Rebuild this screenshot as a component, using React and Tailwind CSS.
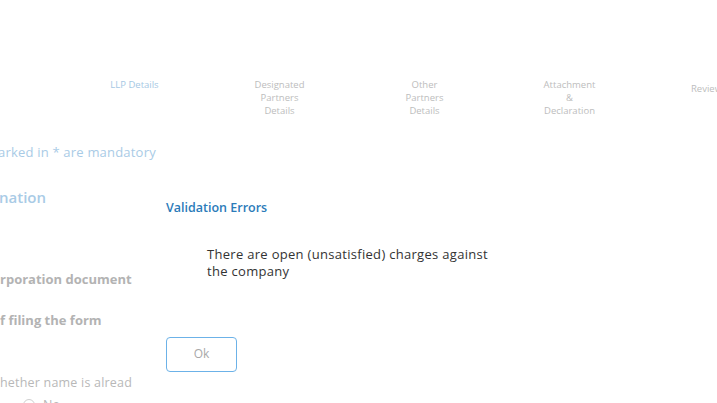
const font = { fontFamily: '"Open Sans", "Liberation Sans", sans-serif' };

const steps = [
  { lines: ["LLP Details"], active: true },
  { lines: ["Designated", "Partners", "Details"] },
  { lines: ["Other", "Partners", "Details"] },
  { lines: ["Attachment", "&", "Declaration"] },
  { lines: ["Review"], late: true },
];

function Stepper() {
  return (
    <div className="flex ml-[62px] w-[800px]">
      {steps.map((s, i) => (
        <div
          key={i}
          className={`w-[145px] shrink-0 text-center text-[9.5px] leading-[13px] ${
            s.active ? "text-[#a6c8e4]" : "text-[#bdbdbd]"
          } ${s.late ? "mt-1 pr-[16px]" : ""}`}
        >
          {s.lines.map((l) => (
            <div key={l}>{l}</div>
          ))}
        </div>
      ))}
    </div>
  );
}

function ValidationModal() {
  return (
    <div className="absolute left-[150px] top-[180px] right-0 bottom-0 bg-white">
      <div className="pl-4 pt-[19px]">
        <h2 className="text-[12.5px] font-semibold text-[#2b7bb9]">Validation Errors</h2>
        <p className="ml-[41px] mt-[28px] w-[290px] text-[13px] leading-[17px] tracking-[0.3px] text-[#333333]">
          There are open (unsatisfied) charges against the company
        </p>
        <button className="mt-[57px] w-[71px] h-[35px] rounded-[4px] border border-[#6cb2e8] text-[12px] text-[#a8a8a8]">
          Ok
        </button>
      </div>
    </div>
  );
}

export default function App() {
  return (
    <div className="relative w-[717px] h-[403px] overflow-hidden bg-white" style={font}>
      <div className="pt-[78px]">
        <Stepper />
        <div className="mt-[26px] text-[13px] tracking-[0.2px] text-[#a9cbe6] -ml-[2px]">arked in * are mandatory</div>
        <div className="mt-[23px] text-[15px] font-semibold text-[#a9cbe6] -ml-[1px]">nation</div>
        <div className="mt-[62px] text-[13px] font-bold text-[#b3b3b3]">rporation document</div>
        <div className="mt-[21px] text-[13px] font-bold text-[#b3b3b3]">f filing the form</div>
        <div className="mt-[44px] text-[12.5px] tracking-[0.2px] text-[#b8b8b8]">hether name is alread</div>
        <div className="flex items-center gap-[8px] ml-[23px] mt-[3px]">
          <span className="w-[12px] h-[12px] rounded-full border border-[#cfcfcf]" />
          <span className="text-[12.5px] text-[#b8b8b8]">No</span>
        </div>
      </div>
      <ValidationModal />
    </div>
  );
}
